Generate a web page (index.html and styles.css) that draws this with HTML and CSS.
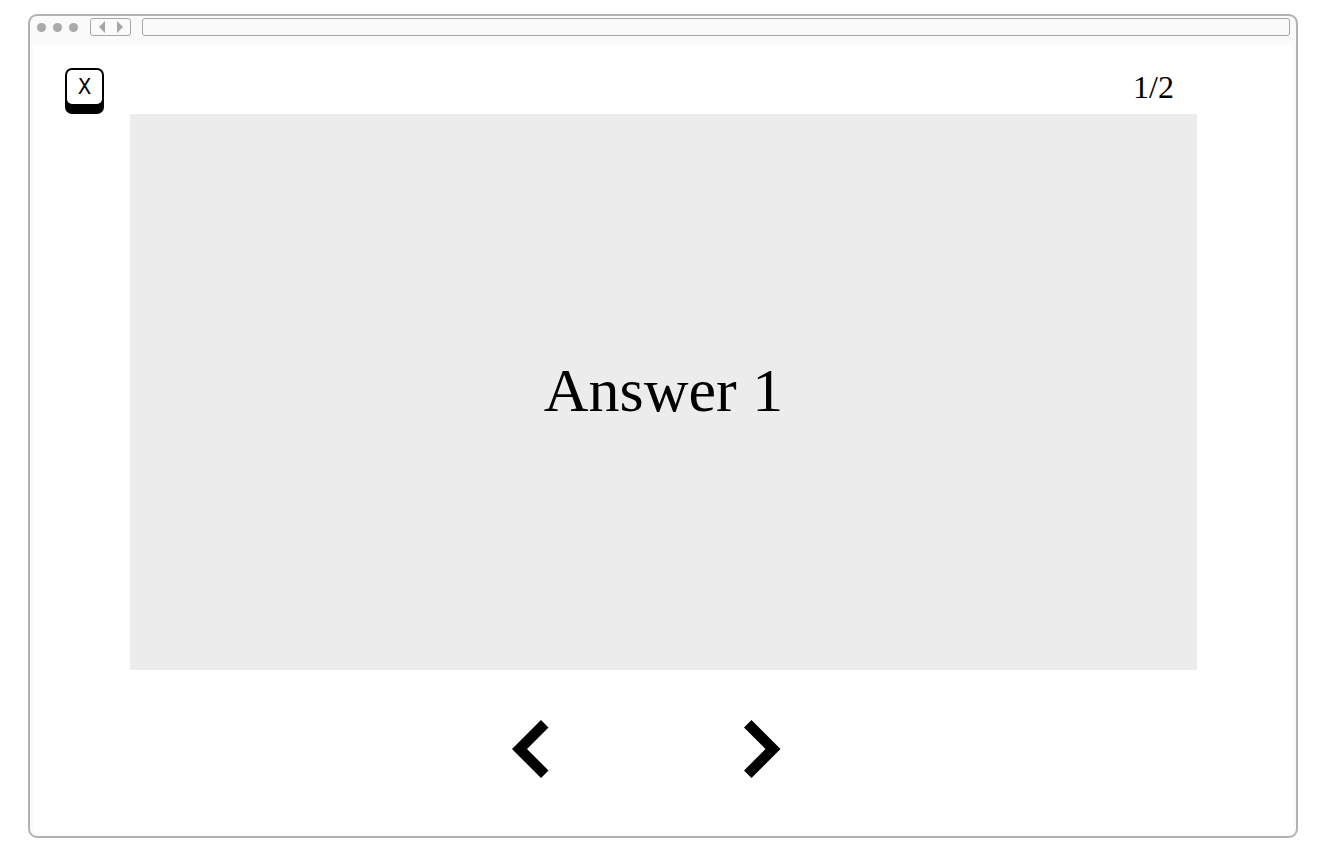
FILE: index.html
```html
<!DOCTYPE html>
<html lang="en">
<head>
<meta charset="utf-8">
<meta name="viewport" content="width=device-width, initial-scale=1">
<title>Answer 1</title>
<link rel="stylesheet" href="styles.css">
</head>
<body>
<div class="window">
  <header class="toolbar">
    <div class="dots"><span class="dot"></span><span class="dot"></span><span class="dot"></span></div>
    <div class="history">
      <button class="history-button" type="button" aria-label="Back"><svg width="6" height="12" viewBox="0 0 6 12"><path d="M6 0v12L0 6z"/></svg></button>
      <button class="history-button" type="button" aria-label="Forward"><svg width="6" height="12" viewBox="0 0 6 12"><path d="M0 0v12l6-6z"/></svg></button>
    </div>
    <input class="address" type="text" aria-label="Address">
  </header>
  <main class="page">
    <div class="top">
      <button class="key" type="button"><span class="key-face">X</span></button>
      <span class="counter">1/2</span>
    </div>
    <section class="card"><h1 class="answer">Answer 1</h1></section>
    <nav class="pager">
      <button class="arrow" type="button" aria-label="Previous answer"><svg width="37" height="58" viewBox="0 0 37 58"><path d="M29 0l7.500 7.500L15 29l21.500 21.500L29 58 0 29z"/></svg></button>
      <button class="arrow" type="button" aria-label="Next answer"><svg width="37" height="58" viewBox="0 0 37 58"><path d="M7.500 0L0 7.500 21.500 29 0 50.500 7.500 58l29-29z"/></svg></button>
    </nav>
  </main>
</div>
</body>
</html>
```
FILE: styles.css
```css
* {
  box-sizing: border-box;
}

body {
  margin: 0;
  min-height: 100vh;
  padding: 14px 29px 19px 28px;
  display: flex;
  background: #fff;
  color: #000;
  font-family: "Liberation Serif", "Times New Roman", serif;
}

button {
  margin: 0;
  padding: 0;
  border: 0;
  background: none;
  color: inherit;
  cursor: pointer;
}

svg {
  display: block;
  fill: currentColor;
}

.window {
  flex: 1;
  display: flex;
  flex-direction: column;
  padding: 0 3px 3px;
  border: 2px solid #b2b2b2;
  border-radius: 9px;
  background: #fafafa;
}

.toolbar {
  display: flex;
  align-items: flex-start;
  height: 29px;
  padding: 2px 3px 0 4px;
}

.dots {
  display: flex;
  align-items: center;
  gap: 7px;
  height: 18px;
  margin-right: 12px;
}

.dot {
  width: 9px;
  height: 9px;
  border-radius: 50%;
  background: #a9a9a9;
}

.history {
  display: flex;
  justify-content: center;
  align-items: center;
  gap: 12px;
  width: 41px;
  height: 18px;
  margin-right: 11px;
  border: 1px solid #a6a6a6;
  border-radius: 3px;
  background: #fafafa;
}

.history-button {
  color: #a6a6a6;
}

.address {
  flex: 1;
  min-width: 0;
  height: 18px;
  padding: 0 6px;
  border: 1px solid #a6a6a6;
  border-radius: 3px;
  background: #fafafa;
}

.page {
  flex: 1;
  display: flex;
  flex-direction: column;
  padding: 23px 96px 55px 97px;
  background: #fff;
}

.top {
  display: flex;
  align-items: flex-start;
  justify-content: space-between;
  margin: 0 23px 0 -65px;
}

.key {
  display: flex;
  width: 39px;
  height: 46px;
  padding: 2px 2px 10px;
  border-radius: 7px;
  background: #000;
}

.key-face {
  flex: 1;
  border-radius: 5px;
  background: #fff;
  font: 22px/34px "Liberation Sans Narrow", "DejaVu Sans Condensed", sans-serif;
}

.counter {
  font-size: 32px;
  line-height: 38px;
}

.card {
  flex: 1;
  display: flex;
  align-items: center;
  justify-content: center;
  padding-bottom: 5px;
  background: #ececec;
}

.answer {
  margin: 0;
  font-size: 62px;
  font-weight: 400;
  line-height: 72px;
}

.pager {
  display: flex;
  justify-content: center;
  gap: 195px;
  margin: 50px 34px 0 0;
}
```
